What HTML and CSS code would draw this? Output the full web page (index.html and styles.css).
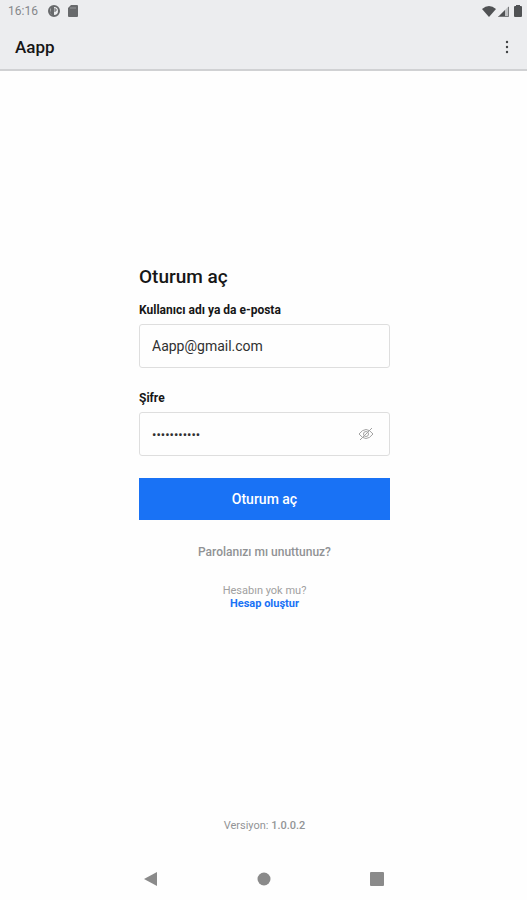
FILE: index.html
```html
<!DOCTYPE html>
<html lang="tr">
<head>
<meta charset="utf-8">
<meta name="viewport" content="width=device-width, initial-scale=1">
<title>Aapp</title>
<link rel="stylesheet" href="styles.css">
</head>
<body>
<header class="top">
  <div class="status">
    <span class="clock">16:16</span>
    <svg class="notice" width="12" height="12" viewBox="0 0 12 12"><circle cx="6" cy="6" r="5" fill="none" stroke="#686a6c" stroke-width="2"/><path d="M3 2h3v8H4L2 8z" fill="#686a6c"/><path d="M6 4h2v2H6" fill="none" stroke="#686a6c"/></svg>
    <svg width="10" height="12" viewBox="0 0 10 12"><path d="M3 0h6q1 0 1 1v10q0 1-1 1H1q-1 0-1-1V3z" fill="#686a6c"/><path d="M3 2v2M5 2v2M7 2v2" stroke="#96989a"/></svg>
    <span class="system">
      <svg width="14" height="11" viewBox="0 0 14 11"><path d="M0 3Q7-3 14 3L7 11z" fill="#505254"/></svg>
      <svg width="11" height="11" viewBox="0 0 11 11"><path d="M11 0v11H0z" fill="#bfc1c3"/><path d="M7 4v7H0z" fill="#505254"/><path d="M10.500 1v9.500H1" fill="none" stroke="#77797b"/></svg>
      <svg class="battery" width="8" height="12" viewBox="0 0 8 12"><path d="M2 0h4v1h1q1 0 1 1v9q0 1-1 1H1q-1 0-1-1V2q0-1 1-1h1z" fill="#505254"/></svg>
    </span>
  </div>
  <div class="appbar">
    <h1>Aapp</h1>
    <button class="icon-button" type="button" aria-label="Menü"><svg width="4" height="14" viewBox="0 0 4 14" fill="#404244"><circle cx="2" cy="2" r="1.200"/><circle cx="2" cy="7" r="1.200"/><circle cx="2" cy="12" r="1.200"/></svg></button>
  </div>
</header>
<main>
  <form class="login">
    <h2>Oturum aç</h2>
    <label for="user">Kullanıcı adı ya da e-posta</label>
    <div class="field"><input id="user" type="text" value="Aapp@gmail.com"></div>
    <label for="password">Şifre</label>
    <div class="field">
      <input id="password" class="password" type="password" value="12345678901">
      <button class="icon-button" type="button" aria-label="Şifreyi göster"><svg width="16" height="16" viewBox="0 0 16 16" fill="none" stroke="#a3a3a3"><path d="M1 8q7-9 14 0q-7 9-14 0z"/><circle cx="8" cy="8" r="2.500"/><path d="M2 14L14 2"/></svg></button>
    </div>
    <button class="submit" type="submit">Oturum aç</button>
    <a class="forgot" href="#">Parolanızı mı unuttunuz?</a>
    <p class="signup">Hesabın yok mu?<a href="#">Hesap oluştur</a></p>
  </form>
  <p class="version">Versiyon: <strong>1.0.0.2</strong></p>
</main>
<nav class="navigation">
  <button class="icon-button" type="button" aria-label="Geri"><svg width="14" height="16" viewBox="0 0 14 16"><path d="M0 8L13 1v14z" fill="#8a8a8a"/></svg></button>
  <button class="icon-button" type="button" aria-label="Ana ekran"><svg width="14" height="14" viewBox="0 0 14 14"><circle cx="7" cy="7" r="6.500" fill="#8a8a8a"/></svg></button>
  <button class="icon-button" type="button" aria-label="Son uygulamalar"><svg width="14" height="14" viewBox="0 0 14 14"><rect width="14" height="14" rx="1" fill="#8a8a8a"/></svg></button>
</nav>
</body>
</html>
```
FILE: styles.css
```css
* { box-sizing: border-box; }
body {
  margin: 0;
  min-height: 100vh;
  display: flex;
  flex-direction: column;
  background: #fefefe;
  color: #161616;
  font-family: Roboto, "Liberation Sans", sans-serif;
}
h1, h2, p { margin: 0; }
svg { display: block; }
a { text-decoration: none; }
.icon-button {
  display: grid;
  place-items: center;
  padding: 0;
  border: 0;
  background: none;
}
.top {
  background: #ecedef;
  border-bottom: 2px solid #d0d1d3;
}
.status {
  display: flex;
  align-items: center;
  height: 22px;
  padding: 0 5px 0 8px;
}
.clock {
  color: #85878a;
  font-size: 12px;
}
.notice { margin: 0 8px 0 10px; }
.system {
  display: flex;
  align-items: center;
  gap: 2px;
  margin-left: auto;
}
.battery { margin-left: 3px; }
.appbar {
  display: flex;
  align-items: center;
  justify-content: space-between;
  height: 47px;
  padding: 2px 12px 0 15px;
}
.appbar .icon-button {
  width: 16px;
  height: 24px;
}
h1 {
  font-size: 17px;
  font-weight: 500;
  line-height: 24px;
}
main {
  flex: 1;
  display: flex;
  flex-direction: column;
  align-items: center;
  padding: 192px 0 24px 2px;
}
.login {
  display: flex;
  flex-direction: column;
  width: 100%;
  max-width: 251px;
}
h2 {
  margin-bottom: 11px;
  font-size: 19px;
  font-weight: 500;
  line-height: 28px;
}
label {
  margin-bottom: 6px;
  font-size: 12px;
  font-weight: 700;
  line-height: 16px;
}
.field {
  display: flex;
  align-items: center;
  height: 44px;
  margin-bottom: 22px;
  padding: 0 15px 0 12px;
  border: 1px solid #dedede;
  border-radius: 3px;
}
.field input {
  flex: 1;
  min-width: 0;
  padding: 0;
  border: 0;
  outline: 0;
  background: none;
  color: #303030;
  font-family: inherit;
  font-size: 14px;
}
.field .password { font-size: 13px; }
.submit {
  height: 42px;
  margin-bottom: 24px;
  border: 0;
  background: #1972f5;
  color: #fff;
  font-family: inherit;
  font-size: 14px;
  font-weight: 500;
}
.forgot {
  margin-bottom: 24px;
  color: #909294;
  font-size: 12px;
  font-weight: 500;
  line-height: 16px;
  text-align: center;
}
.signup {
  color: #a0a0a0;
  font-size: 11px;
  line-height: 13px;
  text-align: center;
}
.signup a {
  display: block;
  color: #1972f5;
  font-weight: 700;
}
.version {
  margin-top: auto;
  color: #929496;
  font-size: 11px;
  line-height: 16px;
}
.version strong { font-weight: 500; }
.navigation {
  display: flex;
  align-items: center;
  justify-content: center;
  gap: 85px;
  height: 42px;
}
.navigation .icon-button {
  width: 28px;
  height: 28px;
}
```
